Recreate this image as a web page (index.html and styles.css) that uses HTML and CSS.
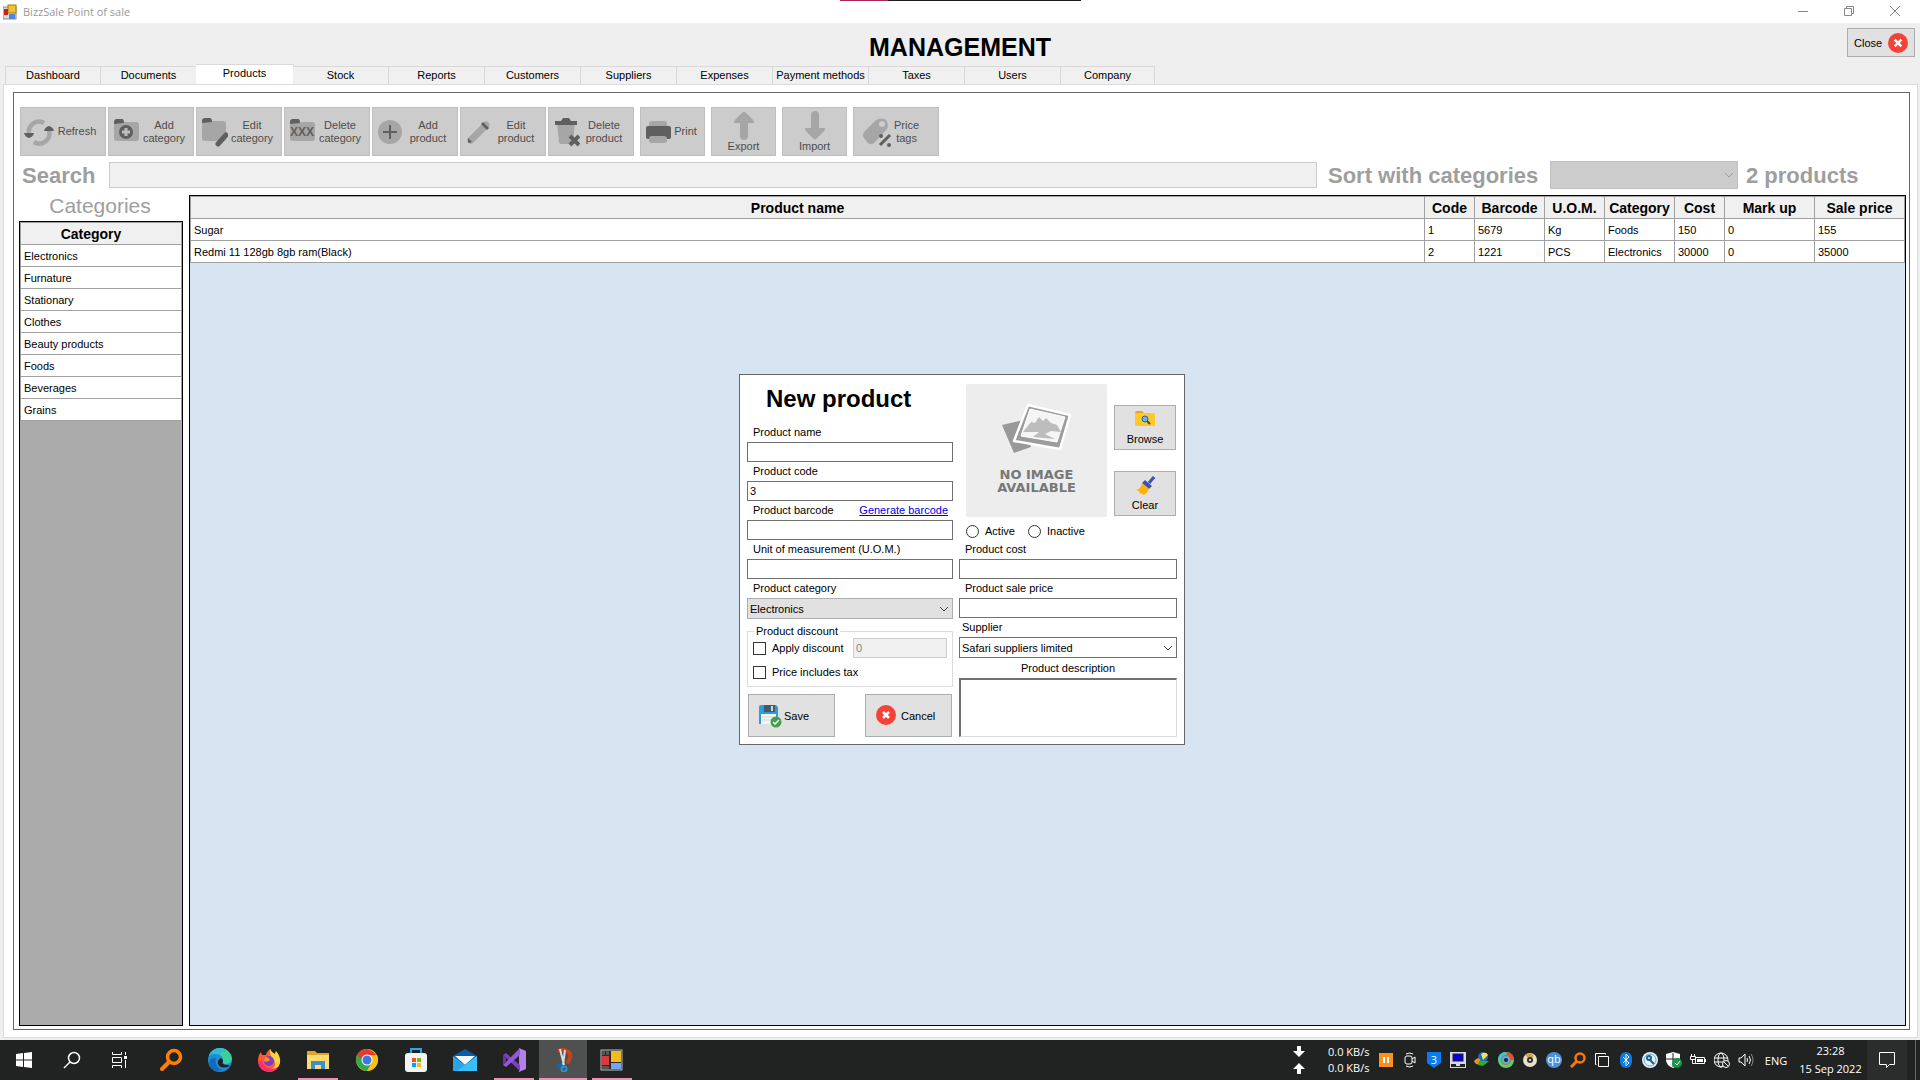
FILE: index.html
```
<!DOCTYPE html>
<html lang="en">
<head>
    <meta charset="UTF-8">
    <meta name="viewport" content="width=device-width, initial-scale=1.0">
    <title>BizzSale Point of sale</title>
    <link rel="stylesheet" href="styles.css">
</head>
<body>

    <!-- Window title bar -->
    <div class="title-bar">
        <svg class="app-icon" width="14" height="16" viewBox="0 0 14 16">
            <rect x="0" y="3" width="13" height="12" fill="#d9d9d9" stroke="#8c8c8c" stroke-width="1"/>
            <rect x="5" y="1" width="8" height="8" fill="#f2c230" stroke="#a67c00"/>
            <rect x="1" y="5" width="4" height="6" fill="#c8201c"/>
            <rect x="6" y="10" width="6" height="5" fill="#4a86e0"/>
        </svg>
        <span class="title-text">BizzSale Point of sale</span>
        <div class="window-buttons">
            <button aria-label="Minimize"><svg width="12" height="12" viewBox="0 0 12 12"><path d="M1 6.500h10"/></svg></button>
            <button aria-label="Restore"><svg width="12" height="12" viewBox="0 0 12 12"><path d="M1.500 3.500h7v7h-7zM3.500 3.500v-2h7v7h-2"/></svg></button>
            <button aria-label="Close window"><svg width="12" height="12" viewBox="0 0 12 12"><path d="M1 1l10 10M11 1L1 11"/></svg></button>
        </div>
        <div class="top-strip"></div>
    </div>

    <header class="header">
        <h1>MANAGEMENT</h1>
        <button class="close-btn">Close
            <svg width="20" height="20" viewBox="0 0 24 24"><circle cx="12" cy="12" r="12" fill="#f44336"/><path d="M8 8l8 8M16 8l-8 8" stroke="#fff" stroke-width="3"/></svg>
        </button>
    </header>

    <nav class="tabs">
        <button>Dashboard</button>
        <button>Documents</button>
        <button class="active">Products</button>
        <button>Stock</button>
        <button>Reports</button>
        <button>Customers</button>
        <button>Suppliers</button>
        <button>Expenses</button>
        <button>Payment methods</button>
        <button>Taxes</button>
        <button>Users</button>
        <button>Company</button>
    </nav>

    <main class="tab-page">
        <div class="panel">

            <!-- Toolbar -->
            <div class="toolbar">
                <button disabled>
                    <svg width="30" height="30" viewBox="0 0 30 30"><path d="M5 16A10 10 0 0 1 20 6M25 14A10 10 0 0 1 10 25" fill="none" stroke="#a6a6a6" stroke-width="4.500"/><path d="M0 16h10q-1 4-5 5q-4-1-5-5zM20 14h10q-1-4-5-5q-4 1-5 5z" fill="#5f5f5f"/></svg>
                    <span>Refresh</span>
                </button>
                <button disabled>
                    <svg width="28" height="28" viewBox="0 0 28 28"><rect x="2" y="4" width="25" height="19" rx="3" fill="#a6a6a6"/><path d="M2 6V4q0-3 3-3h5q2 0 2 4z" fill="#5f5f5f"/><circle cx="14" cy="14" r="7" fill="#5f5f5f"/><path d="M14 10v8M10 14h8" stroke="#bdbdbd" stroke-width="3"/></svg>
                    <span>Add<br>category</span>
                </button>
                <button disabled>
                    <svg width="28" height="30" viewBox="0 0 28 30"><rect x="2" y="4" width="24" height="20" rx="3" fill="#a6a6a6"/><path d="M2 6V4q0-3 3-3h5q2 0 2 4z" fill="#5f5f5f"/><path d="M18 27l8-9" stroke="#5f5f5f" stroke-width="5" stroke-linecap="round"/></svg>
                    <span>Edit<br>category</span>
                </button>
                <button disabled>
                    <svg width="28" height="28" viewBox="0 0 28 28"><rect x="2" y="4" width="25" height="19" rx="3" fill="#a6a6a6"/><path d="M2 6V4q0-3 3-3h5q2 0 2 4z" fill="#5f5f5f"/><text x="14" y="18" class="folder-text">XXX</text></svg>
                    <span>Delete<br>category</span>
                </button>
                <button disabled>
                    <svg width="28" height="28" viewBox="0 0 28 28"><circle cx="14" cy="14" r="12" fill="#a6a6a6"/><path d="M14 7v14M7 14h14" stroke="#5f5f5f" stroke-width="2"/></svg>
                    <span>Add<br>product</span>
                </button>
                <button disabled>
                    <svg width="28" height="28" viewBox="0 0 28 28"><path d="M7 22L22 7" stroke="#a6a6a6" stroke-width="7" stroke-linecap="round"/><path d="M17 6l6 6l2-2l-6-6z" fill="#5f5f5f"/><path d="M4 20l4 4l-4 1z" fill="#5f5f5f"/></svg>
                    <span>Edit<br>product</span>
                </button>
                <button disabled>
                    <svg width="28" height="30" viewBox="0 0 28 30"><path d="M5 6h18l-2 19q0 2-2 2H9q-2 0-2-2z" fill="#a6a6a6"/><path d="M3 4h6l2-3h6l2 3h6v4H3z" fill="#5f5f5f"/><path d="M18 19l9 9M27 19l-9 9" stroke="#5f5f5f" stroke-width="4"/></svg>
                    <span>Delete<br>product</span>
                </button>
                <button class="narrow" disabled>
                    <svg width="28" height="28" viewBox="0 0 28 28"><rect x="5" y="3" width="18" height="22" rx="3" fill="#a6a6a6"/><rect x="2" y="8" width="25" height="13" rx="2" fill="#5f5f5f"/><rect x="5" y="18" width="18" height="7" rx="3" fill="#a6a6a6"/></svg>
                    <span>Print</span>
                </button>
                <button class="narrow stacked" disabled>
                    <svg width="28" height="30" viewBox="0 0 28 30"><path d="M14 12v14" stroke="#a6a6a6" stroke-width="8" stroke-linecap="round"/><path d="M4 12q0-2 9-10q1-1 2 0q9 8 9 10v1H4z" fill="#a6a6a6"/></svg>
                    <span>Export</span>
                </button>
                <button class="narrow stacked" disabled>
                    <svg width="28" height="30" viewBox="0 0 28 30"><path d="M14 5v14" stroke="#a6a6a6" stroke-width="8" stroke-linecap="round"/><path d="M4 19q0 2 9 10q1 1 2 0q9-8 9-10v-1H4z" fill="#a6a6a6"/></svg>
                    <span>Import</span>
                </button>
                <button class="price-tags" disabled>
                    <svg width="34" height="32" viewBox="0 0 34 32"><path d="M4 16L16 4q6-3 10 0q3 4 1 9L14 27q-4 3-7-1l-3-4q-2-3 0-6z" fill="#a6a6a6"/><circle cx="22" cy="8" r="3" fill="#ccc"/><path d="M20 29L30 19" stroke="#5f5f5f" stroke-width="3"/><circle cx="21" cy="20" r="2" fill="#5f5f5f"/><circle cx="29" cy="29" r="2" fill="#5f5f5f"/></svg>
                    <span>Price<br>tags</span>
                </button>
            </div>

            <!-- Search row -->
            <div class="search-row">
                <label class="search-label" for="search">Search</label>
                <input type="text" id="search" disabled>
                <label class="sort-label" for="sort">Sort with categories</label>
                <div class="select-box sort-box">
                    <select id="sort" disabled><option></option></select>
                    <svg width="10" height="6" viewBox="0 0 10 6"><path d="M1 1l4 4l4-4"/></svg>
                </div>
                <span class="product-count">2 products</span>
            </div>

            <div class="grids">
                <section class="categories">
                    <h2>Categories</h2>
                    <div class="grid-box gray">
                        <table class="category-table">
                            <thead><tr><th>Category</th></tr></thead>
                            <tbody>
                                <tr><td>Electronics</td></tr>
                                <tr><td>Furnature</td></tr>
                                <tr><td>Stationary</td></tr>
                                <tr><td>Clothes</td></tr>
                                <tr><td>Beauty products</td></tr>
                                <tr><td>Foods</td></tr>
                                <tr><td>Beverages</td></tr>
                                <tr><td>Grains</td></tr>
                            </tbody>
                        </table>
                    </div>
                </section>
                <div class="grid-box blue">
                    <table class="product-table">
                        <colgroup>
                            <col>
                            <col class="col-code">
                            <col class="col-barcode">
                            <col class="col-uom">
                            <col class="col-category">
                            <col class="col-cost">
                            <col class="col-markup">
                            <col class="col-price">
                        </colgroup>
                        <thead>
                            <tr><th class="sortable">Product name</th><th>Code</th><th>Barcode</th><th>U.O.M.</th><th>Category</th><th>Cost</th><th>Mark up</th><th>Sale price</th></tr>
                        </thead>
                        <tbody>
                            <tr><td>Sugar</td><td>1</td><td>5679</td><td>Kg</td><td>Foods</td><td>150</td><td>0</td><td>155</td></tr>
                            <tr><td>Redmi 11 128gb 8gb ram(Black)</td><td>2</td><td>1221</td><td>PCS</td><td>Electronics</td><td>30000</td><td>0</td><td>35000</td></tr>
                        </tbody>
                    </table>
                </div>
            </div>
        </div>

        <!-- New product dialog -->
        <form class="dialog">
            <div class="left-side">
                <h2>New product</h2>
                <div class="field">
                    <label for="name">Product name</label>
                    <input type="text" id="name">
                </div>
                <div class="field">
                    <label for="code">Product code</label>
                    <input type="text" id="code" value="3">
                </div>
                <div class="field">
                    <div class="label-row">
                        <label for="barcode">Product barcode</label>
                        <a href="#">Generate barcode</a>
                    </div>
                    <input type="text" id="barcode">
                </div>
                <div class="field">
                    <label for="uom">Unit of measurement (U.O.M.)</label>
                    <input type="text" id="uom">
                </div>
                <div class="field">
                    <label for="category">Product category</label>
                    <div class="select-box category-box">
                        <select id="category"><option>Electronics</option></select>
                        <svg width="10" height="6" viewBox="0 0 10 6"><path d="M1 1l4 4l4-4"/></svg>
                    </div>
                </div>
                <fieldset>
                    <legend>Product discount</legend>
                    <div class="check-row">
                        <input type="checkbox" id="discount">
                        <label for="discount">Apply discount</label>
                        <input type="text" value="0" aria-label="Discount" disabled>
                    </div>
                    <div class="check-row">
                        <input type="checkbox" id="tax">
                        <label for="tax">Price includes tax</label>
                    </div>
                </fieldset>
                <div class="dialog-buttons">
                    <button type="button">
                        <svg width="24" height="24" viewBox="0 0 24 24"><path d="M1 3q0-2 2-2h15l2 2v17H1z" fill="#2f9be0"/><rect x="6" y="1" width="11" height="7" fill="#455a64"/><rect x="13" y="2" width="2" height="5" fill="#cfd8dc"/><rect x="3" y="10" width="15" height="10" fill="#f5f5f5"/><path d="M4 13h13M4 16h13" stroke="#cfd8dc"/><circle cx="18" cy="18" r="5.500" fill="#43a047"/><path d="M15 18l2 2l4-4" stroke="#fff" stroke-width="1.500" fill="none"/></svg>
                        Save
                    </button>
                    <button type="button">
                        <svg width="24" height="24" viewBox="0 0 24 24"><circle cx="11" cy="11" r="10" fill="#f44336"/><path d="M8 8l6 6M14 8l-6 6" stroke="#fff" stroke-width="2.500"/></svg>
                        Cancel
                    </button>
                </div>
            </div>

            <div class="right-side">
                <div class="picture-row">
                    <div class="no-image">
                        <svg width="72" height="52" viewBox="0 0 72 52">
                            <path d="M1 22L22 17L30 44L13 50z" fill="#999"/>
                            <path d="M27 2L69 12L59 46L13 38z" fill="#9c9c9c" stroke="#fff" stroke-width="2.500" stroke-linejoin="round"/>
                            <path d="M29 6L64 14L56 39L20 33z" fill="#f5f5f5" stroke="#fff"/>
                            <path d="M22 29L30 19L34 20L38 14L42 18L45 15L50 20L56 22L60 29L50 28L44 31L54 36L32 34L38 29z" fill="#bdbdbd"/>
                        </svg>
                        <span>NO IMAGE<br>AVAILABLE</span>
                    </div>
                    <div class="picture-buttons">
                        <button type="button">
                            <svg width="22" height="18" viewBox="0 0 22 18"><path d="M1 3q0-2 2-2h5l2 2h9q2 0 2 2v11H1z" fill="#ffca28"/><path d="M1 3q0-2 2-2h5l2 2z" fill="#f0a020"/><circle cx="11" cy="9" r="3" fill="#64b5f6" stroke="#37618e"/><path d="M13 11l3 3" stroke="#37474f" stroke-width="2"/></svg>
                            Browse
                        </button>
                        <button type="button">
                            <svg width="20" height="20" viewBox="0 0 20 20"><path d="M19 1l-5 6" stroke="#3f51b5" stroke-width="3"/><path d="M10 4l7 6l-3 3l-7-6z" fill="#3f51b5"/><path d="M7 7l7 6q-2 5-6 6l-1-2l-2 1l-1-3l-3-1q5-1 6-7z" fill="#ffb300"/></svg>
                            Clear
                        </button>
                    </div>
                </div>
                <div class="radio-row">
                    <input type="radio" name="status" id="active"><label for="active">Active</label>
                    <input type="radio" name="status" id="inactive"><label for="inactive">Inactive</label>
                </div>
                <div class="field">
                    <label for="cost">Product cost</label>
                    <input type="text" id="cost">
                </div>
                <div class="field">
                    <label for="price">Product sale price</label>
                    <input type="text" id="price">
                </div>
                <div class="field">
                    <label class="supplier-label" for="supplier">Supplier</label>
                    <div class="select-box">
                        <select id="supplier"><option>Safari suppliers limited</option></select>
                        <svg width="10" height="6" viewBox="0 0 10 6"><path d="M1 1l4 4l4-4"/></svg>
                    </div>
                </div>
                <div class="field description">
                    <label for="description">Product description</label>
                    <textarea id="description"></textarea>
                </div>
            </div>
        </form>
    </main>

    <!-- Taskbar -->
    <footer class="taskbar">
        <div class="system-buttons">
            <button aria-label="Start"><svg width="16" height="16" viewBox="0 0 16 16"><path d="M0 2l7-1v6.500H0zM8 1l8-1v7.500H8zM0 8.500h7V15l-7-1zM8 8.500h8V16l-8-1z" fill="#fff"/></svg></button>
            <button aria-label="Search"><svg width="18" height="18" viewBox="0 0 18 18"><path d="M7 11L1 17" stroke="#fff" stroke-width="1.500"/><circle cx="11" cy="7" r="5.500" fill="none" stroke="#fff" stroke-width="1.500"/></svg></button>
            <button aria-label="Task view"><svg width="18" height="16" viewBox="0 0 18 16"><path d="M1.500 0v2.500h9V0M1.500 5.500h9v5h-9zM1.500 16v-2.500h9V16M14.500 0v3M14.500 8v8" fill="none" stroke="#fff"/><rect x="13" y="4" width="3" height="3" fill="#fff"/></svg></button>
        </div>
        <div class="apps">
            <button aria-label="Everything"><svg width="24" height="24" viewBox="0 0 24 24"><circle cx="15" cy="9" r="6.500" fill="none" stroke="#ff8000" stroke-width="3.500"/><path d="M10 14l-7 7" stroke="#ff8000" stroke-width="4" stroke-linecap="round"/></svg></button>
            <button aria-label="Edge"><svg width="24" height="24" viewBox="0 0 24 24"><circle cx="12" cy="12" r="12" fill="#1b8ed6"/><path d="M1 8Q4 0 12 0q11 1 12 11q-1 5-6 5q-4 0-3-3q0-6-6-7q-5-1-8 2z" fill="#3ccf9b"/><path d="M1 8Q4 0 12 0q4 0 7 2q-6 1-7 4q-7-3-11 2z" fill="#33b8d8"/><path d="M8 10q-2 9 6 12q-8 3-12-4q-3-8 6-8z" fill="#1669b8"/><path d="M22 18q-9 4-12-2q-1-4 3-6q2 1 2 3q-2 4 5 4z" fill="#202322"/></svg></button>
            <button aria-label="Firefox"><svg width="24" height="24" viewBox="0 0 24 24"><path d="M1 13q0-6 3-9l1 3l4 0q1-4 4-6q1 3 5 5l1-3q4 5 4 11q-1 9-11 10Q2 23 1 13z" fill="#ff5a36"/><path d="M13 1q1 3 5 5l1-3q5 6 4 12q-2 6-8 6q5-4 2-9q-5-4-4-11z" fill="#ffd23e"/><path d="M1 14q1 9 11 10q6 0 9-5q-5 3-10 1q-5-2-6-8z" fill="#ff2d6a"/><circle cx="12" cy="13" r="5" fill="#7a3fc4"/><path d="M8 9q4 0 5 3q-3 3-6 1z" fill="#ff8a2a"/></svg></button>
            <button class="running" aria-label="Explorer"><svg width="24" height="24" viewBox="0 0 24 24"><path d="M1 3h8l2 2h12v16H1z" fill="#e0a526"/><path d="M1 7h22v14H1z" fill="#ffdb72"/><path d="M5 21v-8h14v8h-4v-4H9v4z" fill="#3b8fd0"/></svg></button>
            <button aria-label="Chrome"><svg width="24" height="24" viewBox="0 0 24 24"><circle cx="12" cy="12" r="11" fill="#fbc116"/><path d="M12 12H23Q22 4 12 1Q5 1 2 7l5 8z" fill="#e33b2e"/><path d="M2 7q-3 7 3 13q3 3 7 3l5-8l-5 1z" fill="#2da94f"/><path d="M12 7h10q3 8-3 13q-3 3-7 3l5-9z" fill="#fbc116"/><circle cx="12" cy="12" r="5.500" fill="#fff"/><circle cx="12" cy="12" r="4.500" fill="#3b78e7"/></svg></button>
            <button aria-label="Store"><svg width="24" height="24" viewBox="0 0 24 24"><path d="M7 6V1h10v5" fill="none" stroke="#28a8ea" stroke-width="2"/><rect x="1" y="5" width="22" height="19" rx="3" fill="#f3f3f3"/><path d="M8 10h4v4H8z" fill="#f25022"/><path d="M13 10h4v4h-4z" fill="#7fba00"/><path d="M8 15h4v4H8z" fill="#00a4ef"/><path d="M13 15h4v4h-4z" fill="#ffb900"/></svg></button>
            <button aria-label="Mail"><svg width="24" height="24" viewBox="0 0 24 24"><path d="M0 8L12 1L24 8v5H0z" fill="#0a5ca8"/><path d="M2 8h20L12 17z" fill="#f5f9fc"/><path d="M0 8l12 9L24 8v15H0z" fill="#2aa5ea"/><path d="M24 8v15H4z" fill="#36c0f6"/></svg></button>
            <button class="running" aria-label="Visual Studio"><svg width="24" height="24" viewBox="0 0 24 24"><path d="M17 0l7 3v18l-7 3z" fill="#b37feb"/><path d="M1 7l3-2L18 17v6z" fill="#7b3fc0"/><path d="M1 17l3 2L18 7V0z" fill="#9457dc"/><path d="M1 7v10l3-2V9z" fill="#6a31ad"/></svg></button>
            <button class="running current" aria-label="Snipping"><svg width="24" height="24" viewBox="0 0 24 24"><path d="M7 3q9-3 12 3q1 5-3 9" fill="none" stroke="#c8401c" stroke-width="4"/><path d="M9 1l4 16M14 2l-2 15" stroke="#d9dde0" stroke-width="2"/><path d="M11 16l-5 3" stroke="#1565a8" stroke-width="4"/><circle cx="13" cy="21" r="2.500" fill="none" stroke="#2196d9" stroke-width="2"/></svg></button>
            <button class="running" aria-label="BizzSale"><svg width="24" height="24" viewBox="0 0 24 24"><rect x="1" y="2" width="21" height="20" fill="#2b2b2b" stroke="#bbb"/><rect x="11" y="3" width="10" height="11" fill="#f3bd22"/><rect x="2" y="8" width="7" height="9" fill="#d93a3a"/><rect x="11" y="15" width="10" height="6" fill="#78a5f0"/><path d="M2 3h3v4H2zM6 3h3v4H6zM2 18h7v3H2z" fill="#555"/></svg></button>
        </div>

        <div class="tray">
            <div class="net-arrows">
                <svg width="12" height="12" viewBox="0 0 12 12"><path d="M4 0h4v5h4l-6 6l-6-6h4z" fill="#fff"/></svg>
                <svg width="12" height="12" viewBox="0 0 12 12"><path d="M4 12h4V7h4L6 1L0 7h4z" fill="#fff"/></svg>
            </div>
            <div class="net-speed">0.0 KB/s<br>0.0 KB/s</div>
            <div class="tray-icons">
                <svg viewBox="0 0 16 16"><rect x="1" y="1" width="14" height="14" fill="#f7931e"/><path d="M6 5v6M10 5v6" stroke="#fff" stroke-width="2"/></svg>
                <svg viewBox="0 0 16 16"><rect x="3" y="4" width="7" height="8" rx="2" fill="none" stroke="#fff"/><path d="M10 7l3-2v6l-3-2M4 2q4-2 7 0M4 14q4 2 7 0" fill="none" stroke="#fff"/></svg>
                <svg viewBox="0 0 16 16"><path d="M1 0h14v11l-7 5l-7-5z" fill="#0a7cf0"/><text x="8" y="12" class="three">3</text></svg>
                <svg viewBox="0 0 16 16"><rect x="0" y="0" width="16" height="16" fill="#d8d8e8"/><rect x="3" y="2" width="10" height="7" fill="#0000e0" stroke="#222"/><path d="M1 12h5v2h4v-2h5v3H1z" fill="#222"/></svg>
                <svg viewBox="0 0 16 16"><circle cx="9" cy="5" r="5" fill="#1769c2"/><path d="M7 2q5-3 7 1l-5 5z" fill="#ffe04a"/><path d="M0 9q3-4 6-2l1 5q-5 2-7-3z" fill="#f28c28"/><path d="M5 9h10l-6 5l-5-1z" fill="#28b328"/></svg>
                <svg viewBox="0 0 16 16"><circle cx="8" cy="8" r="8" fill="#5bd16d"/><path d="M8 0a8 8 0 0 1 8 8h-6z" fill="#e0523a"/><path d="M0 8a8 8 0 0 1 8-8v5z" fill="#39c7e0"/><circle cx="8" cy="8" r="5" fill="#e8553a"/><circle cx="8" cy="8" r="4" fill="#48b6e8"/><circle cx="8" cy="8" r="2" fill="#222"/></svg>
                <svg viewBox="0 0 16 16"><circle cx="8" cy="8" r="7" fill="#e8e0c8"/><path d="M3 3q5-4 9 1L8 8z" fill="#c9a548"/><circle cx="8" cy="8" r="3" fill="#333"/><circle cx="8" cy="8" r="1" fill="#fff"/></svg>
                <svg viewBox="0 0 16 16"><circle cx="8" cy="8" r="8" fill="#4f8fd6"/><text x="8" y="11" class="qb">qb</text></svg>
                <svg viewBox="0 0 16 16"><circle cx="10" cy="6" r="4.500" fill="none" stroke="#ff7800" stroke-width="2.500"/><path d="M7 9l-6 6" stroke="#ff7800" stroke-width="3"/></svg>
                <svg viewBox="0 0 16 16"><path d="M4.500 4.500h10v10h-10zM2.500 12.500h-1v-11h10v1" fill="none" stroke="#fff"/></svg>
                <svg viewBox="0 0 16 16"><rect x="2" y="0" width="12" height="16" rx="6" fill="#0a7ce0"/><path d="M5 5l6 6l-3 3V2l3 3l-6 6" fill="none" stroke="#fff"/></svg>
                <svg viewBox="0 0 16 16"><circle cx="8" cy="8" r="8" fill="#e3f1fa"/><circle cx="8" cy="8" r="6" fill="none" stroke="#68a9d0"/><circle cx="7" cy="6" r="2" fill="none" stroke="#1b5f93" stroke-width="2"/><path d="M8 8l4 4" stroke="#1b5f93" stroke-width="2"/></svg>
                <svg viewBox="0 0 16 16"><path d="M7 0l7 2v6q0 5-7 8Q0 13 0 8V2z" fill="#fff"/><path d="M7 1v14M0 7h14" stroke="#202322"/><circle cx="11" cy="11" r="5" fill="#159947"/><path d="M9 11l2 2l3-4" fill="none" stroke="#fff"/></svg>
                <svg viewBox="0 0 16 16"><path d="M5.500 5.500h9v6h-9z" fill="none" stroke="#fff"/><path d="M7 7h6v3H7zM15 7h1v3h-1z" fill="#fff"/><path d="M1.500 2v3M4.500 2v3M.5 4.500h5v3h-5zM2.500 8v3.500h3" fill="none" stroke="#fff"/></svg>
                <svg viewBox="0 0 16 16"><circle cx="7" cy="8" r="7" fill="none" stroke="#fff"/><ellipse cx="7" cy="8" rx="3" ry="7" fill="none" stroke="#fff"/><path d="M0 6h14M0 10h10" stroke="#fff"/><circle cx="12" cy="12" r="3.500" fill="#202322" stroke="#fff"/><path d="M10 10l4 4" stroke="#fff"/></svg>
                <svg viewBox="0 0 16 16"><path d="M1 6h2l4-4v12l-4-4H1zM9 6q1 2 0 4M11 4q3 4 0 8" fill="none" stroke="#fff"/><path d="M13 2q4 6 0 12" fill="none" stroke="#888"/></svg>
            </div>
            <span class="language">ENG</span>
            <div class="clock">23:28<br>15 Sep 2022</div>
            <button class="notifications" aria-label="Notifications"><svg width="16" height="16" viewBox="0 0 16 16"><path d="M.5.500h15v12h-5l-3 3v-3h-7z" fill="none" stroke="#fff"/></svg></button>
            <div class="show-desktop"></div>
        </div>
    </footer>

</body>
</html>
```
FILE: styles.css
```
* {
    margin: 0;
    padding: 0;
    box-sizing: border-box;
}

body {
    font-family: 'Liberation Sans', Arial, sans-serif;
    font-size: 11px;
    color: #000;
    background-color: #efefef;
    display: flex;
    flex-direction: column;
    height: 100vh;
    overflow: hidden;
}

button, input, select, textarea {
    font-family: inherit;
    font-size: 11px;
    color: inherit;
    border-radius: 0;
}

svg {
    flex-shrink: 0;
}

/* Title bar */
.title-bar {
    position: relative;
    display: flex;
    align-items: center;
    height: 23px;
    flex-shrink: 0;
    background-color: #fff;
    padding-left: 3px;
}

.title-text {
    flex: 1;
    margin-left: 6px;
    font-family: 'Open Sans', sans-serif;
    font-size: 11px;
    color: #999;
}

.window-buttons {
    display: flex;
    margin-right: 2px;
}

.window-buttons button {
    width: 46px;
    height: 22px;
    border: none;
    background: none;
}

.window-buttons path {
    fill: none;
    stroke: #888;
}

.top-strip {
    position: absolute;
    top: 0;
    left: 50%;
    width: 241px;
    height: 1px;
    margin-left: -120px;
    background: linear-gradient(to right, #a8275a 48px, #1c1c1c 48px);
}

/* Header */
.header {
    display: grid;
    grid-template-columns: 1fr auto 1fr;
    height: 41px;
    flex-shrink: 0;
}

.header h1 {
    grid-column: 2;
    margin-top: 12px;
    font-size: 25px;
    line-height: 24px;
}

.close-btn {
    justify-self: end;
    display: flex;
    align-items: center;
    justify-content: space-between;
    width: 68px;
    height: 29px;
    margin: 5px 5px 0 0;
    padding: 0 6px;
    background-color: #e1e1e1;
    border: 1px solid #adadad;
}

/* Tabs */
.tabs {
    display: flex;
    align-items: flex-end;
    height: 20px;
    padding-left: 5px;
    flex-shrink: 0;
}

.tabs button {
    width: 96px;
    height: 18px;
    padding-bottom: 1px;
    border: 1px solid #d9d9d9;
    border-width: 1px 1px 0 0;
    background-color: #f0f0f0;
    white-space: nowrap;
}

.tabs button:first-child {
    border-left-width: 1px;
}

.tabs button:last-child {
    width: 94px;
}

.tabs .active {
    width: 98px;
    height: 20px;
    margin: 0 -1px;
    padding-bottom: 3px;
    background-color: #fff;
}

.tab-page {
    position: relative;
    flex: 1;
    display: flex;
    min-height: 0;
    margin: 0 2px 2px 3px;
    padding: 7px 7px 7px 9px;
    background-color: #fff;
    border: 1px solid #dcdcdc;
}

.panel {
    flex: 1;
    display: flex;
    flex-direction: column;
    min-width: 0;
    padding: 14px 3px 3px 5px;
    border: 1px solid #64666a;
}

/* Toolbar */
.toolbar {
    display: flex;
    gap: 2px;
    padding-left: 1px;
}

.toolbar button {
    display: flex;
    align-items: center;
    width: 86px;
    height: 49px;
    padding: 0 5px 0 3px;
    line-height: 13px;
    color: #4d4d4d;
    background-color: #ccc;
    border: 1px solid #bfbfbf;
}

.toolbar span {
    flex: 1;
    text-align: center;
}

.toolbar .narrow {
    width: 65px;
    margin-left: 4px;
}

.toolbar .stacked {
    flex-direction: column;
    padding: 2px 2px 0;
}

.toolbar .price-tags {
    margin-left: 4px;
    padding-left: 6px;
    padding-right: 20px;
}

.folder-text {
    font-size: 12px;
    font-weight: bold;
    text-anchor: middle;
    fill: #5f5f5f;
}

/* Search row */
.search-row {
    display: flex;
    align-items: center;
    height: 28px;
    margin: 5px 0 6px;
    font-size: 22px;
    line-height: 26px;
    font-weight: bold;
    color: #9e9e9e;
}

.search-label, .sort-label, .product-count {
    padding-top: 2px;
    white-space: nowrap;
}

.search-label {
    width: 90px;
    padding-left: 3px;
}

.search-row input {
    flex: 1;
    min-width: 0;
    height: 26px;
    background-color: #f0f0f0;
    border: 1px solid #ccc;
}

.sort-label {
    width: 233px;
    padding-left: 11px;
}

.sort-box {
    width: 188px;
}

.product-count {
    width: 168px;
    padding-left: 8px;
}

/* Drop-downs */
.select-box {
    position: relative;
}

.select-box select {
    display: block;
    width: 100%;
    height: 21px;
    padding-left: 2px;
    appearance: none;
    background-color: #fff;
    border: 1px solid #707070;
    opacity: 1;
}

.select-box svg {
    position: absolute;
    right: 4px;
    top: 50%;
    margin-top: -3px;
    pointer-events: none;
}

.select-box path {
    fill: none;
    stroke: #444;
}

.category-box select {
    background-color: #e1e1e1;
    border-color: #adadad;
}

.sort-box select {
    height: 28px;
    background-color: #ccc;
    border-color: #bfbfbf;
}

.sort-box path {
    stroke: #a0a0a0;
}

/* Grids */
.grids {
    flex: 1;
    display: flex;
    gap: 6px;
    min-height: 0;
}

.categories {
    display: flex;
    flex-direction: column;
    width: 164px;
}

.categories h2 {
    height: 26px;
    padding-right: 2px;
    font-size: 21px;
    line-height: 22px;
    font-weight: normal;
    text-align: center;
    color: #9e9e9e;
}

.grid-box {
    flex: 1;
    min-width: 0;
    border: 1px solid #000;
}

.gray {
    background-color: #ababab;
}

.blue {
    background-color: #d7e4f1;
}

table {
    width: 100%;
    table-layout: fixed;
    border-collapse: collapse;
    background-color: #fff;
}

th, td {
    height: 22px;
    border: 1px solid #a0a0a0;
    text-align: left;
    white-space: nowrap;
}

td {
    padding: 0 3px;
}

th {
    font-size: 14px;
    text-align: center;
    background-color: #f0f0f0;
}

.category-table th, .sortable {
    padding-right: 20px;
}

.col-code {
    width: 50px;
}

.col-barcode, .col-category {
    width: 70px;
}

.col-uom {
    width: 60px;
}

.col-cost {
    width: 50px;
}

.col-markup, .col-price {
    width: 90px;
}

/* New product dialog */
.dialog {
    position: absolute;
    inset: 0 0 3px 3px;
    margin: auto;
    width: 446px;
    height: fit-content;
    display: grid;
    grid-template-columns: 206px 218px;
    column-gap: 6px;
    padding: 0 7px 7px;
    background-color: #fff;
    border: 1px solid #64666a;
}

.dialog h2 {
    padding-left: 19px;
    font-size: 24px;
    line-height: 48px;
}

.field label {
    display: block;
    padding-left: 6px;
    line-height: 19px;
}

.field .supplier-label {
    padding-left: 3px;
}

.field input, .check-row input[type="text"] {
    display: block;
    width: 100%;
    height: 20px;
    padding: 0 2px;
    background-color: #fff;
    border: 1px solid #707070;
}

.label-row {
    display: flex;
    justify-content: space-between;
    padding-right: 5px;
    line-height: 19px;
}

a {
    color: #0000e0;
}

fieldset {
    height: 62px;
    margin-top: 6px;
    padding: 0 5px;
    border: 1px solid #dcdcdc;
}

legend {
    margin-left: 1px;
    padding: 0 2px;
    line-height: 13px;
}

.check-row {
    display: flex;
    align-items: center;
    gap: 6px;
    height: 20px;
    margin-bottom: 4px;
}

.check-row input[type="text"] {
    width: 94px;
    margin-left: auto;
    color: #838383;
    background-color: #f0f0f0;
    border-color: #ccc;
}

input[type="checkbox"], input[type="radio"] {
    appearance: none;
    width: 13px;
    height: 13px;
    background-color: #fff;
    border: 1px solid #333;
}

input[type="radio"] {
    border-radius: 50%;
}

.dialog-buttons {
    display: flex;
    justify-content: space-between;
    padding: 7px 1px 0;
}

.dialog-buttons button {
    display: flex;
    align-items: center;
    gap: 2px;
    width: 87px;
    height: 43px;
    padding-left: 9px;
    background-color: #e1e1e1;
    border: 1px solid #adadad;
}

.picture-row {
    display: flex;
    justify-content: space-between;
    padding: 9px 1px 0 7px;
}

.no-image {
    display: flex;
    flex-direction: column;
    align-items: center;
    width: 141px;
    height: 133px;
    padding-top: 19px;
    border-radius: 2px;
    background-color: #ededed;
}

.no-image span {
    margin-top: 13px;
    font-family: 'DejaVu Sans', sans-serif;
    font-size: 13px;
    line-height: 13px;
    font-weight: bold;
    text-align: center;
    color: #777;
}

.picture-buttons {
    display: flex;
    flex-direction: column;
    gap: 21px;
    padding-top: 21px;
}

.picture-buttons button {
    display: flex;
    flex-direction: column;
    align-items: center;
    justify-content: space-between;
    width: 62px;
    height: 45px;
    padding: 4px 0;
    background-color: #e1e1e1;
    border: 1px solid #adadad;
}

.radio-row {
    display: flex;
    align-items: center;
    height: 23px;
    padding: 5px 0 0 7px;
}

.radio-row label {
    margin: 0 13px 0 6px;
}

.description {
    padding-top: 1px;
}

.description label {
    padding: 0;
    text-align: center;
}

.description textarea {
    display: block;
    width: 100%;
    height: 59px;
    resize: none;
    border: 1px solid #dcdcdc;
    border-top: 2px solid #707070;
    border-left: 2px solid #707070;
}

/* Taskbar */
.taskbar {
    display: flex;
    height: 40px;
    flex-shrink: 0;
    background-color: #202322;
    color: #fff;
    font-family: 'Open Sans', sans-serif;
    font-size: 11px;
}

.system-buttons, .apps, .tray {
    display: flex;
}

.taskbar button {
    display: flex;
    align-items: center;
    justify-content: center;
    width: 48px;
    border: none;
    background: none;
}

.apps {
    gap: 1px;
    margin-left: 3px;
}

.taskbar .running {
    background: linear-gradient(#ee8fb5, #ee8fb5) bottom / 40px 2px no-repeat;
}

.taskbar .current {
    background-color: #4f5150;
    background-size: 48px 2px;
}

.tray {
    margin-left: auto;
    align-items: center;
}

.net-arrows {
    display: flex;
    flex-direction: column;
    gap: 4px;
    width: 35px;
}

.net-speed {
    width: 46px;
    line-height: 16px;
}

.tray-icons {
    display: flex;
    gap: 8px;
    width: 384px;
    padding: 0 4px;
}

.tray-icons svg {
    width: 16px;
    height: 16px;
}

.three, .qb {
    font-size: 11px;
    text-anchor: middle;
    fill: #fff;
}

.language {
    width: 36px;
    text-align: center;
}

.clock {
    width: 73px;
    line-height: 18px;
    text-align: center;
}

.taskbar .notifications {
    width: 40px;
    height: 40px;
    margin-right: 8px;
    background-color: #2a2d2c;
}

.show-desktop {
    width: 5px;
    height: 40px;
    border-left: 1px solid #666;
}
```
